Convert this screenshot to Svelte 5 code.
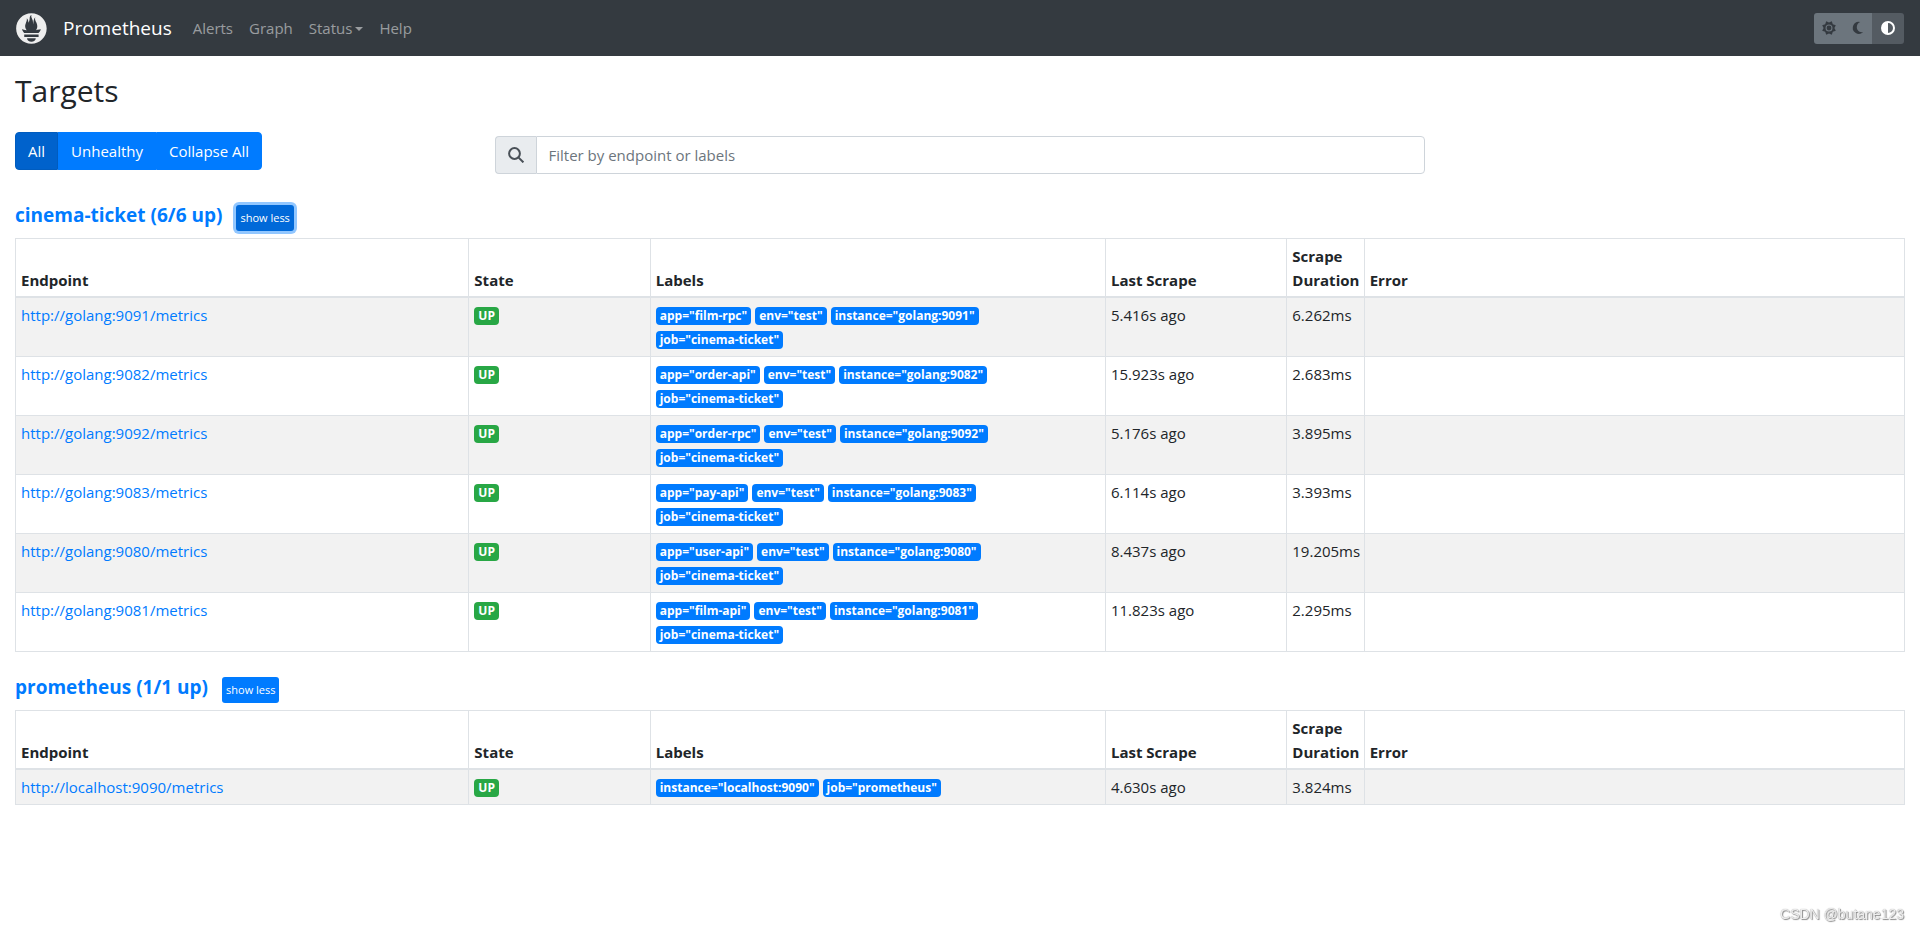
<script lang="ts">
    type Target = {
        endpoint: string;
        labels: Record<string, string>;
        lastScrape: string;
        duration: string;
    };

    function cinema(app: string, port: number, lastScrape: string, duration: string): Target {
        return {
            endpoint: `http://golang:${port}/metrics`,
            labels: {
                app,
                env: "test",
                instance: `golang:${port}`,
                job: "cinema-ticket",
            },
            lastScrape,
            duration,
        };
    }

    const pools: { name: string; targets: Target[] }[] = [
        {
            name: "cinema-ticket",
            targets: [
                cinema("film-rpc", 9091, "5.416s ago", "6.262ms"),
                cinema("order-api", 9082, "15.923s ago", "2.683ms"),
                cinema("order-rpc", 9092, "5.176s ago", "3.895ms"),
                cinema("pay-api", 9083, "6.114s ago", "3.393ms"),
                cinema("user-api", 9080, "8.437s ago", "19.205ms"),
                cinema("film-api", 9081, "11.823s ago", "2.295ms"),
            ],
        },
        {
            name: "prometheus",
            targets: [
                {
                    endpoint: "http://localhost:9090/metrics",
                    labels: { instance: "localhost:9090", job: "prometheus" },
                    lastScrape: "4.630s ago",
                    duration: "3.824ms",
                },
            ],
        },
    ];

    let expanded: Record<string, boolean> = $state({
        "cinema-ticket": true,
        prometheus: true,
    });
    let focused = $state("cinema-ticket");
    let filter = $state("");
    let view = $state("all");
    let theme = $state("auto");

    function toggle(name: string) {
        expanded[name] = !expanded[name];
        focused = name;
    }

    function collapseAll() {
        for (const pool of pools) expanded[pool.name] = false;
    }

    function visible(targets: Target[]) {
        if (view === "unhealthy") return [];
        const q = filter.toLowerCase();
        return targets.filter((t) =>
            (t.endpoint + " " + Object.values(t.labels).join(" ")).toLowerCase().includes(q),
        );
    }
</script>

<nav class="navbar">
    <a class="brand" href="#graph">
        <svg class="logo" viewBox="0 0 114 115" aria-hidden="true">
            <path
                fill="#eeeeee"
                d="M56.667.667C25.372.667 0 26.036 0 57.332c0 31.295 25.372 56.666 56.667 56.666s56.666-25.371 56.666-56.666c0-31.296-25.372-56.665-56.666-56.665zm0 106.055c-8.904 0-16.123-5.948-16.123-13.283H72.79c0 7.334-7.219 13.283-16.123 13.283zM83.297 89.04H30.034v-9.658h53.264v9.658zm-.191-14.629h-52.92c-.176-.203-.356-.403-.526-.609-5.452-6.62-6.736-10.076-7.983-13.598-.021-.116 6.611 1.355 11.314 2.413 0 0 2.42.56 5.958 1.205-3.397-3.982-5.414-9.044-5.414-14.218 0-11.359 8.712-21.285 5.569-29.308 3.059.249 6.331 6.456 6.552 16.161 3.252-4.494 4.613-12.701 4.613-17.733 0-5.21 3.433-11.262 6.867-11.469-3.061 5.045.793 9.37 4.219 20.099 1.285 4.03 1.121 10.812 2.113 15.113C63.797 33.534 65.333 20.5 71 16c-2.5 5.667.37 12.758 2.333 16.167 3.167 5.5 5.087 9.667 5.087 17.548 0 5.284-1.951 10.259-5.242 14.148 3.742-.702 6.326-1.335 6.326-1.335l12.152-2.371c.001-.001-1.765 7.261-8.55 14.254z"
            />
        </svg>
        Prometheus
    </a>
    <div class="links">
        <a href="#alerts">Alerts</a>
        <a href="#graph">Graph</a>
        <a href="#status" class="dropdown">Status</a>
        <a href="#help">Help</a>
    </div>
    <div class="themes" role="group" aria-label="Theme">
        <button class:active={theme === "light"} aria-label="Light theme" onclick={() => (theme = "light")}>
            <svg viewBox="0 0 16 16" fill="currentColor" aria-hidden="true">
                <path
                    fill-rule="evenodd"
                    d="M13.4 8l1.400 2.800-3 1-1 3L8 13.400l-2.800 1.400-1-3-3-1L2.600 8 1.200 5.200l3-1 1-3L8 2.600l2.800-1.400 1 3 3 1zM8 4.500a3.500 3.500 0 1 0 0 7 3.500 3.500 0 0 0 0-7zm0 1.100a2.400 2.400 0 1 1 0 4.800 2.400 2.400 0 0 1 0-4.800z"
                />
            </svg>
        </button>
        <button class:active={theme === "dark"} aria-label="Dark theme" onclick={() => (theme = "dark")}>
            <svg viewBox="0 0 16 16" fill="currentColor" aria-hidden="true">
                <path d="M10.300 2A6 6 0 1 0 13.100 12C9 12.800 6.800 9.800 6.800 7.200c0-2.300 1.200-4.300 3.500-5.200z" />
            </svg>
        </button>
        <button class:active={theme === "auto"} aria-label="Browser theme" onclick={() => (theme = "auto")}>
            <svg viewBox="0 0 16 16" fill="currentColor" aria-hidden="true">
                <path
                    fill-rule="evenodd"
                    d="M8 1a7 7 0 1 0 0 14A7 7 0 0 0 8 1zm0 2a5 5 0 0 1 0 10z"
                />
            </svg>
        </button>
    </div>
</nav>

<main>
    <h2>Targets</h2>

    <div class="toolbar">
        <div class="btn-group">
            <button class:active={view === "all"} onclick={() => (view = "all")}>All</button>
            <button class:active={view === "unhealthy"} onclick={() => (view = "unhealthy")}>Unhealthy</button>
            <button onclick={collapseAll}>Collapse All</button>
        </div>
        <div class="search">
            <label for="filter" aria-label="Filter">
                <svg viewBox="0 0 16 16" fill="none" stroke="currentColor" stroke-width="2" aria-hidden="true">
                    <circle cx="6.500" cy="6.500" r="5.400" />
                    <path d="m10.400 10.400 5 5" />
                </svg>
            </label>
            <input id="filter" type="text" placeholder="Filter by endpoint or labels" bind:value={filter} />
        </div>
    </div>

    {#each pools as pool}
        <section>
            <h3>
                <a href="#pool-{pool.name}">{pool.name} ({pool.targets.length}/{pool.targets.length} up)</a>
                <button class="toggle" class:focus={focused === pool.name} onclick={() => toggle(pool.name)}>
                    show {expanded[pool.name] ? "less" : "more"}
                </button>
            </h3>
            {#if expanded[pool.name]}
                <table>
                    <thead>
                        <tr>
                            <th class="endpoint">Endpoint</th>
                            <th class="state">State</th>
                            <th class="labels">Labels</th>
                            <th class="last">Last Scrape</th>
                            <th class="duration">Scrape Duration</th>
                            <th>Error</th>
                        </tr>
                    </thead>
                    <tbody>
                        {#each visible(pool.targets) as target}
                            <tr>
                                <td><a href={target.endpoint}>{target.endpoint}</a></td>
                                <td><span class="badge up">UP</span></td>
                                <td>
                                    <div class="badges">
                                        {#each Object.entries(target.labels) as [key, value]}
                                            <span class="badge">{key}="{value}"</span>
                                        {/each}
                                    </div>
                                </td>
                                <td>{target.lastScrape}</td>
                                <td>{target.duration}</td>
                                <td></td>
                            </tr>
                        {/each}
                    </tbody>
                </table>
            {/if}
        </section>
    {/each}
</main>

<div class="watermark">CSDN @butane123</div>

<style>
    :global(body) {
        margin: 0;
        background: #fff;
        color: #212529;
        font-family: "Segoe UI", "Open Sans", "Noto Sans", sans-serif;
        font-size: 15px;
        line-height: 24px;
    }

    a {
        color: #007bff;
        text-decoration: none;
    }

    button,
    input {
        font: inherit;
    }

    button {
        cursor: pointer;
    }

    .navbar {
        display: flex;
        align-items: center;
        height: 56px;
        padding: 0 16px;
        background: #343a40;
    }

    .brand {
        display: flex;
        align-items: center;
        gap: 16px;
        margin-right: 13px;
        color: #fff;
        font-size: 19px;
    }

    .logo {
        width: 31px;
        height: 31px;
    }

    .links {
        display: flex;
        flex: 1;
    }

    .links a {
        padding: 8px;
        color: rgba(255, 255, 255, 0.5);
    }

    .dropdown::after {
        content: "";
        display: inline-block;
        margin-left: 3px;
        vertical-align: 3px;
        border-top: 4px solid;
        border-left: 4px solid transparent;
        border-right: 4px solid transparent;
    }

    .themes {
        display: flex;
    }

    .themes button {
        display: flex;
        align-items: center;
        justify-content: center;
        width: 29px;
        height: 31px;
        padding: 0;
        border: 0;
        background: #6c757d;
        color: #343a40;
    }

    .themes button:first-child {
        border-radius: 3px 0 0 3px;
    }

    .themes button:last-child {
        width: 32px;
        border-radius: 0 3px 3px 0;
    }

    .themes button.active {
        background: #545b62;
        color: #fff;
    }

    .themes svg {
        width: 16px;
        height: 16px;
    }

    main {
        padding: 0 15px;
    }

    h2 {
        margin: 16px 0 22px;
        font-size: 30px;
        font-weight: 500;
        line-height: 38px;
    }

    .toolbar {
        display: grid;
        grid-template-columns: 1fr 2fr 1fr;
        align-items: start;
        margin-bottom: 25px;
    }

    .btn-group {
        display: flex;
    }

    .btn-group button {
        padding: 6px 12px;
        border: 1px solid #007bff;
        background: #007bff;
        color: #fff;
    }

    .btn-group button:first-child {
        border-radius: 4px 0 0 4px;
    }

    .btn-group button:last-child {
        border-radius: 0 4px 4px 0;
    }

    .btn-group button.active {
        border-color: #005cbf;
        background: #0062cc;
    }

    .search {
        display: flex;
        margin: 4px 8px 0 7px;
    }

    .search label {
        display: flex;
        align-items: center;
        padding: 0 12px;
        border: 1px solid #ced4da;
        border-right: 0;
        border-radius: 4px 0 0 4px;
        background: #e9ecef;
        color: #495057;
    }

    .search svg {
        width: 16px;
        height: 16px;
    }

    .search input {
        flex: 1;
        box-sizing: border-box;
        min-width: 0;
        height: 38px;
        padding: 6px 12px;
        border: 1px solid #ced4da;
        border-radius: 0 4px 4px 0;
        background: #fff;
        color: #495057;
    }

    .search input::placeholder {
        color: #6c757d;
        opacity: 1;
    }

    section {
        margin-bottom: 19px;
    }

    h3 {
        display: flex;
        align-items: center;
        gap: 14px;
        margin: 0 0 7px;
        font-size: 19px;
        font-weight: 700;
        line-height: 32px;
    }

    .toggle {
        height: 26px;
        margin-top: 5px;
        padding: 0 4px;
        border: 0;
        border-radius: 3px;
        background: #007bff;
        color: #fff;
        font-size: 11px;
        font-weight: 400;
        line-height: 26px;
    }

    .toggle.focus {
        background: #0069d9;
        box-shadow: 0 0 0 3px rgba(38, 143, 255, 0.5);
    }

    table {
        width: 100%;
        border-collapse: collapse;
        table-layout: fixed;
    }

    th,
    td {
        box-sizing: border-box;
        padding: 5px;
        border: 1px solid #dee2e6;
        text-align: left;
        vertical-align: top;
    }

    th {
        padding-bottom: 4px;
        border-bottom-width: 2px;
        font-weight: 700;
        vertical-align: bottom;
    }

    tbody tr:nth-child(odd) {
        background: #f2f2f2;
    }

    .endpoint {
        width: 24%;
    }

    .state {
        width: 9.6%;
    }

    .labels {
        width: 24.1%;
    }

    .last {
        width: 9.6%;
    }

    .duration {
        width: 4.1%;
    }

    .badges {
        display: flex;
        flex-wrap: wrap;
        gap: 0 4px;
        max-width: 360px;
    }

    .badge {
        display: inline-block;
        height: 18px;
        margin: 4px 0 2px;
        padding: 0 4px;
        border-radius: 4px;
        background: #007bff;
        color: #fff;
        font-size: 12px;
        font-weight: 700;
        line-height: 18px;
        vertical-align: top;
    }

    .badge.up {
        background: #28a745;
    }

    .watermark {
        position: fixed;
        right: 16px;
        bottom: 3px;
        color: #eee;
        font-family: "Liberation Sans", Arial, sans-serif;
        font-size: 14px;
        text-shadow: 1px 1px 1px #888, 0 0 1px #999;
        pointer-events: none;
    }
</style>
